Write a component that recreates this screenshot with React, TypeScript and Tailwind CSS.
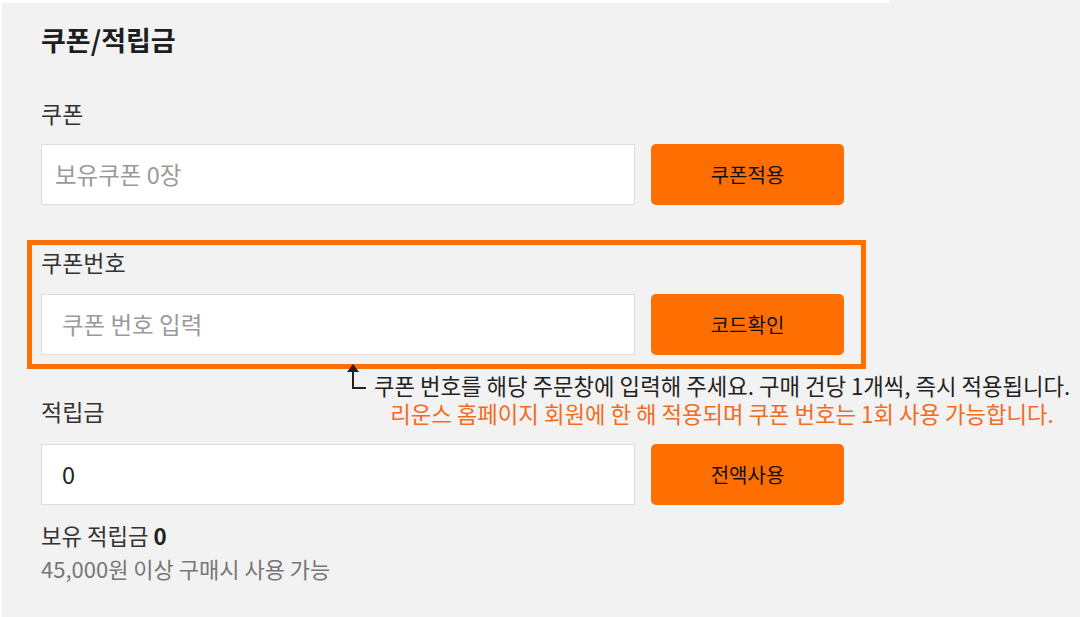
import React from 'react'

const font = '[font-family:"Noto_Sans_CJK_KR","Noto_Sans",sans-serif]'

function Row({ placeholder, value, button, indent = 'pl-[20px]' }: { placeholder?: string; value?: string; button: string; indent?: string }) {
  return (
    <div className="flex gap-4">
      <div className="flex h-[61px] w-[594px] items-center border border-[#dddddd] bg-white">
        {value !== undefined ? (
          <span className={`${indent} text-[23.5px] text-[#222222]`}>{value}</span>
        ) : (
          <span className={`${indent} text-[23.5px] text-[#9a9a9a]`}>{placeholder}</span>
        )}
      </div>
      <button className="flex h-[61px] w-[193px] items-center justify-center rounded-[5px] bg-[#ff6e00] text-[20px] text-[#111111]">
        {button}
      </button>
    </div>
  )
}

export default function App() {
  return (
    <div className={`min-h-screen border-l-2 border-white bg-[#f2f2f2] ${font}`}>
      <div className="h-[3px] w-[887px] bg-white" />

      <div className="pl-[39px]">
        <h1 className="mt-[19px] text-[27px] font-bold leading-[36px] text-[#1e1e1e]">쿠폰/적립금</h1>

        <p className="mt-[41px] text-[23px] leading-[28px] text-[#333333]">쿠폰</p>
        <div className="mt-[17px]">
          <Row placeholder="보유쿠폰 0장" button="쿠폰적용" indent="pl-[13px]" />
        </div>

        <div className="relative -ml-[14px] mt-[35px] w-[839px] border-[5px] border-[#ff6e00] pb-[9px] pl-[9px] pt-[3px]">
          <p className="text-[23px] leading-[28px] text-[#333333]">쿠폰번호</p>
          <div className="mt-[18px]">
            <Row placeholder="쿠폰 번호 입력" button="코드확인" />
          </div>

          {/* 안내 문구 화살표 */}
          <svg className="absolute left-[314px] top-full" width="22" height="28" viewBox="0 0 22 28">
            <polygon points="7,0 1,8 13,8" fill="#222222" />
            <line x1="7" y1="7" x2="7" y2="25" stroke="#222222" strokeWidth="2" />
            <line x1="6" y1="24" x2="20" y2="24" stroke="#222222" strokeWidth="2" />
          </svg>
          <div className="absolute left-[342px] top-[calc(100%+7px)] w-[696px] text-center text-[22.3px] leading-[28px]">
            <p className="whitespace-nowrap text-[#222222]">쿠폰 번호를 해당 주문창에 입력해 주세요. 구매 건당 1개씩, 즉시 적용됩니다.</p>
            <p className="whitespace-nowrap text-[#f26c1e]">리운스 홈페이지 회원에 한 해 적용되며 쿠폰 번호는 1회 사용 가능합니다.</p>
          </div>
        </div>

        <p className="mt-[28px] text-[23px] leading-[28px] text-[#333333]">적립금</p>
        <div className="mt-[19px]">
          <Row value="0" button="전액사용" />
        </div>

        <p className="mt-[16px] text-[22.3px] leading-[28px] text-[#333333]">
          보유 적립금 <span className="font-bold text-[#222222]">0</span>
        </p>
        <p className="mt-[5px] text-[22px] leading-[28px] text-[#777777]">45,000원 이상 구매시 사용 가능</p>
      </div>
    </div>
  )
}
